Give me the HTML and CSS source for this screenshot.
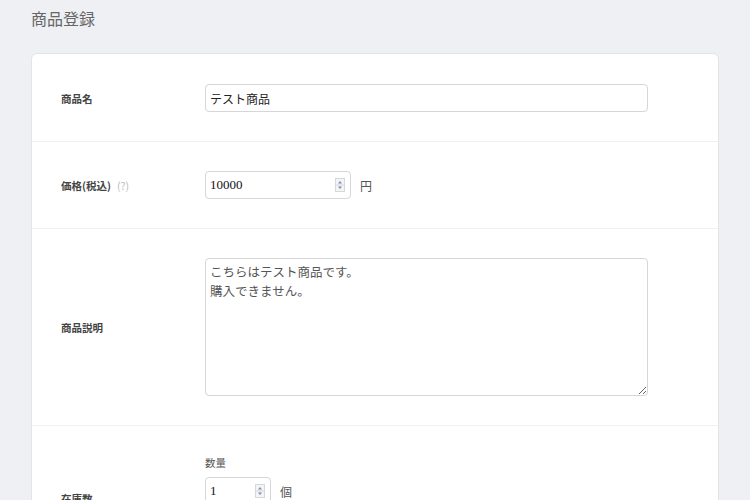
FILE: index.html
```html
<!DOCTYPE html>
<html lang="ja">
<head>
<meta charset="utf-8">
<link rel="stylesheet" href="styles.css">
</head>
<body>
<h1 class="page-title">商品登録</h1>
<div class="card">
  <div class="row">
    <div class="label">商品名</div>
    <div class="field">
      <input class="text-input" type="text" value="テスト商品">
    </div>
  </div>
  <div class="row">
    <div class="label">価格(税込)<span class="help">(?)</span></div>
    <div class="field inline">
      <span class="num-wrap">
        <input class="num-input price" type="number" value="10000">
        <span class="spin"><svg width="10" height="14" viewBox="0 0 10 14"><rect x="0.5" y="0.5" width="9" height="13" fill="#f4f4f6" stroke="#d8d8dc"/><line x1="1" y1="7" x2="9" y2="7" stroke="#d8d8dc"/><path d="M3 5.5 L5 3 L7 5.5 Z" fill="#7d8fb3"/><path d="M3 8.5 L5 11 L7 8.5 Z" fill="#7d8fb3"/></svg></span>
      </span>
      <span class="unit">円</span>
    </div>
  </div>
  <div class="row">
    <div class="label">商品説明</div>
    <div class="field">
      <textarea class="textarea">こちらはテスト商品です。
購入できません。</textarea>
    </div>
  </div>
  <div class="row">
    <div class="label">在庫数</div>
    <div class="field stock">
      <div class="sublabel">数量</div>
      <div class="inline">
        <span class="num-wrap">
          <input class="num-input qty" type="number" value="1">
          <span class="spin"><svg width="10" height="14" viewBox="0 0 10 14"><rect x="0.5" y="0.5" width="9" height="13" fill="#f4f4f6" stroke="#d8d8dc"/><line x1="1" y1="7" x2="9" y2="7" stroke="#d8d8dc"/><path d="M3 5.5 L5 3 L7 5.5 Z" fill="#7d8fb3"/><path d="M3 8.5 L5 11 L7 8.5 Z" fill="#7d8fb3"/></svg></span>
        </span>
        <span class="unit">個</span>
      </div>
    </div>
  </div>
</div>
</body>
</html>
```
FILE: styles.css
```css
html, body {
  margin: 0;
  padding: 0;
}
body {
  background: #eff0f4;
  padding: 0 31px 40px;
  font-family: "Noto Sans CJK JP", "Noto Sans", sans-serif;
  color: #333;
}
.page-title {
  margin: 0;
  padding-top: 8px;
  font-size: 16px;
  line-height: 20px;
  font-weight: normal;
  color: #666;
}
.card {
  margin-top: 25px;
  padding-top: 1px;
  background: #fff;
  border: 1px solid #e3e4e8;
  border-radius: 6px;
}
.row {
  display: grid;
  grid-template-columns: 144px 1fr;
  align-items: center;
  padding: 29px 29px 29px;
  border-bottom: 1px solid #f0f0f2;
}
.label {
  font-size: 10.5px;
  font-weight: bold;
  color: #444;
}
.help {
  font-weight: normal;
  color: #bbb;
  margin-left: 6px;
}
.field.inline, .inline {
  display: flex;
  align-items: center;
}
.text-input, .num-input, .textarea {
  box-sizing: border-box;
  border: 1px solid #d6d6d9;
  border-radius: 4px;
  background: #fff;
  margin: 0;
}
.text-input {
  width: 443px;
  height: 28px;
  padding: 0 4px;
  font-family: "Noto Sans CJK JP", sans-serif;
  font-size: 12px;
  color: #222;
}
.num-wrap {
  position: relative;
  display: block;
}
.num-input {
  display: block;
  height: 28px;
  padding: 0 4px;
  font-family: "Liberation Serif", "Noto Sans CJK JP", serif;
  font-size: 13px;
  color: #111;
  -moz-appearance: textfield;
}
.num-input::-webkit-inner-spin-button,
.num-input::-webkit-outer-spin-button {
  -webkit-appearance: none;
  margin: 0;
}
.spin {
  position: absolute;
  right: 6px;
  top: 7px;
  width: 10px;
  height: 14px;
  line-height: 0;
}
.price {
  width: 146px;
}
.qty {
  width: 66px;
}
.unit {
  margin-left: 9px;
  font-size: 12px;
  color: #555;
}
.textarea {
  display: block;
  width: 443px;
  height: 138px;
  padding: 3px 4px;
  font-family: "Noto Sans CJK JP", sans-serif;
  font-size: 12.5px;
  line-height: 19px;
  color: #555;
  resize: vertical;
}
.stock {
  min-height: 86px;
}
.sublabel {
  font-size: 10.5px;
  color: #555;
  line-height: 15px;
  margin-bottom: 7px;
}
```
